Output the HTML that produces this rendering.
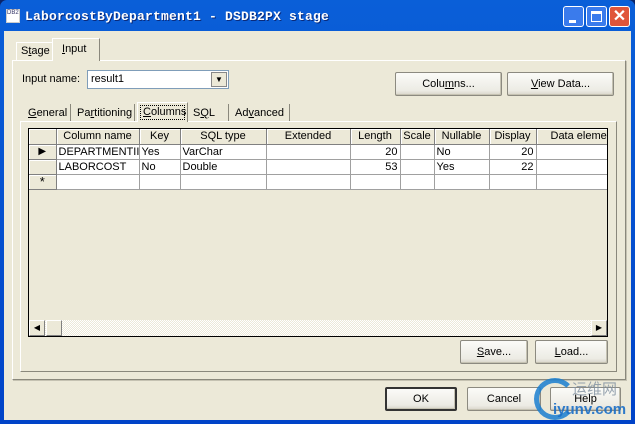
<!DOCTYPE html><html><head><style>
*{box-sizing:border-box}
body{margin:0;width:635px;height:424px;overflow:hidden;font-family:"Liberation Sans",sans-serif;font-size:11px;color:#000;background:#0a246a}
.a{position:absolute}
.win{position:absolute;left:0;top:0;width:635px;height:424px;background:linear-gradient(#0a5fd8,#0043c8);border-radius:7px 7px 0 0}
.body{position:absolute;left:4px;top:31px;width:627px;height:389px;background:#ece9d8}
.btn{position:absolute;background:linear-gradient(#fbfbf8,#ecebe4 80%,#d8d5c8);border:1px solid #8c8a80;border-radius:2px;text-align:center;font-size:11px;box-shadow:inset -1px -1px 0 #c5c2b2}
.tab{position:absolute;font-size:11px;border-right:1px solid #8a887c;padding-top:3px}
.grid td{border-right:1px solid #a0a0a0;border-bottom:1px solid #a0a0a0;height:15px;padding:0 2px;white-space:nowrap;overflow:hidden;font-size:11px}
.grid th{font-weight:normal;background:#ece9d8;border-right:1px solid #808080;border-bottom:1px solid #808080;box-shadow:inset 1px 1px 0 #fff;height:15px;font-size:11px;padding:0}
.grid td.h{background:#ece9d8;border-right:1px solid #808080;border-bottom:1px solid #808080;box-shadow:inset 1px 1px 0 #fff}
.r{text-align:right}
u{text-decoration:underline}
</style></head><body>
<div class="win">
<div class="a" style="left:6px;top:9px;width:14px;height:14px;background:#fff;border:1px solid #ccc;font-size:6px;line-height:6px;color:#336">DB2</div>
<div class="a" style="left:25px;top:9px;color:#fff;font-family:'Liberation Mono',monospace;font-weight:bold;font-size:13px;letter-spacing:0.2px;text-shadow:1px 1px #0a2a7a">LaborcostByDepartment1 - DSDB2PX stage</div>
<div class="a" style="left:563px;top:6px;width:21px;height:21px;border:1px solid #fff;border-radius:3px;background:#3a7bec"><div class="a" style="left:5px;top:13px;width:7px;height:3px;background:#fff"></div></div>
<div class="a" style="left:586px;top:6px;width:21px;height:21px;border:1px solid #fff;border-radius:3px;background:#3a7bec"><div class="a" style="left:4px;top:4px;width:11px;height:11px;border:1px solid #fff;border-top-width:3px"></div></div>
<div class="a" style="left:609px;top:6px;width:21px;height:21px;border:1px solid #fff;border-radius:3px;background:#e0553a;color:#fff;font-size:16px;font-weight:bold;text-align:center;line-height:19px">✕</div>
</div>
<div class="body"></div>
<!-- outer tab panel -->
<div class="a" style="left:12px;top:60px;width:614px;height:320px;border:1px solid #fff;border-right-color:#8a887c;border-bottom-color:#8a887c;box-shadow:1px 1px 0 #c5c2b2"></div>
<div class="a" style="left:16px;top:42px;width:36px;height:18px;border:1px solid #fff;border-right:none;border-bottom:none;padding:2px 0 0 4px;font-size:11px">S<u>t</u>age</div>
<div class="a" style="left:52px;top:38px;width:48px;height:23px;border:1px solid #fff;border-right:1px solid #8a887c;border-bottom:none;background:#ece9d8;padding:4px 0 0 9px;font-size:11px"><u>I</u>nput</div>
<div class="a" style="left:22px;top:73px">Input name:</div>
<div class="a" style="left:87px;top:70px;width:142px;height:19px;background:#fff;border:1px solid #7f9db9;padding:2px 3px">result1</div>
<div class="a" style="left:211px;top:72px;width:16px;height:15px;background:#ece9d8;border:1px solid #888;font-size:8px;text-align:center;line-height:14px">▼</div>
<div class="btn" style="left:395px;top:72px;width:107px;height:24px;line-height:22px">Colu<u>m</u>ns...</div>
<div class="btn" style="left:507px;top:72px;width:107px;height:24px;line-height:22px"><u>V</u>iew Data...</div>
<!-- inner tabs -->
<div class="a" style="left:20px;top:121px;width:597px;height:251px;border:1px solid #fff;border-right-color:#8a887c;border-bottom-color:#8a887c"></div>
<div class="tab" style="left:25px;top:104px;width:46px;height:17px;padding-left:3px"><u>G</u>eneral</div>
<div class="tab" style="left:72px;top:104px;width:63px;height:17px;padding-left:5px">Pa<u>r</u>titioning</div>
<div class="a" style="left:137px;top:102px;width:51px;height:20px;background:#ece9d8;border:1px solid #fff;border-right-color:#8a887c;border-bottom:none"><div class="a" style="left:2px;top:2px;width:45px;height:15px;border:1px dotted #000;padding:0 0 0 2px;font-size:11px"><u>C</u>olumns</div></div>
<div class="tab" style="left:189px;top:104px;width:40px;height:17px;padding-left:4px">S<u>Q</u>L</div>
<div class="tab" style="left:230px;top:104px;width:60px;height:17px;padding-left:5px">Ad<u>v</u>anced</div>
<!-- grid -->
<div class="a" style="left:28px;top:128px;width:580px;height:209px;border:1px solid #000;background:#ece9d8;overflow:hidden">
<table class="grid" style="border-collapse:collapse;table-layout:fixed;width:620px">
<col style="width:27px"><col style="width:83px"><col style="width:41px"><col style="width:86px"><col style="width:84px"><col style="width:50px"><col style="width:34px"><col style="width:55px"><col style="width:47px"><col style="width:113px">
<tr><th></th><th>Column name</th><th>Key</th><th>SQL type</th><th>Extended</th><th>Length</th><th>Scale</th><th>Nullable</th><th>Display</th><th style="text-align:left;padding-left:14px">Data element</th></tr>
<tr style="background:#fff"><td class="h" style="text-align:center;font-size:10px">▶</td><td>DEPARTMENTII</td><td>Yes</td><td>VarChar</td><td></td><td class="r">20</td><td></td><td>No</td><td class="r">20</td><td></td></tr>
<tr style="background:#fff"><td class="h"></td><td>LABORCOST</td><td>No</td><td>Double</td><td></td><td class="r">53</td><td></td><td>Yes</td><td class="r">22</td><td></td></tr>
<tr style="background:#fff"><td class="h" style="text-align:center;font-size:13px;line-height:12px">*</td><td></td><td></td><td></td><td></td><td></td><td></td><td></td><td></td><td></td></tr>
</table>
<div class="a" style="left:0;top:191px;width:578px;height:16px;background:repeating-conic-gradient(#fff 0 25%,#ece9d8 0 50%) 0 0/2px 2px"></div>
<div class="a" style="left:0;top:191px;width:16px;height:16px;background:#ece9d8;border:1px solid #fff;border-right-color:#808080;border-bottom-color:#808080;font-size:8px;text-align:center;line-height:14px">◀</div>
<div class="a" style="left:17px;top:191px;width:16px;height:16px;background:#ece9d8;border:1px solid #fff;border-right-color:#808080;border-bottom-color:#808080"></div>
<div class="a" style="left:562px;top:191px;width:16px;height:16px;background:#ece9d8;border:1px solid #fff;border-right-color:#808080;border-bottom-color:#808080;font-size:8px;text-align:center;line-height:14px">▶</div>
</div>
<div class="btn" style="left:460px;top:340px;width:68px;height:24px;line-height:22px"><u>S</u>ave...</div>
<div class="btn" style="left:535px;top:340px;width:73px;height:24px;line-height:22px"><u>L</u>oad...</div>
<div class="btn" style="left:385px;top:387px;width:72px;height:24px;line-height:20px;border:2px solid #333">OK</div>
<div class="btn" style="left:467px;top:387px;width:74px;height:24px;line-height:22px">Cancel</div>
<div class="btn" style="left:550px;top:387px;width:71px;height:24px;line-height:22px">Help</div>
<div class="a" style="left:534px;top:378px;width:42px;height:42px;border:5px solid #1a7fd0;border-right-color:transparent;border-radius:50%;opacity:.85"></div>
<div class="a" style="left:572px;top:378px;color:#8090a0;font-family:'Noto Sans CJK SC',sans-serif;font-size:15px;opacity:.8">运维网</div>
<div class="a" style="left:553px;top:401px;color:#1a6fc8;font-weight:bold;font-size:15px;opacity:.9">iyunv.com</div>
</body></html>
